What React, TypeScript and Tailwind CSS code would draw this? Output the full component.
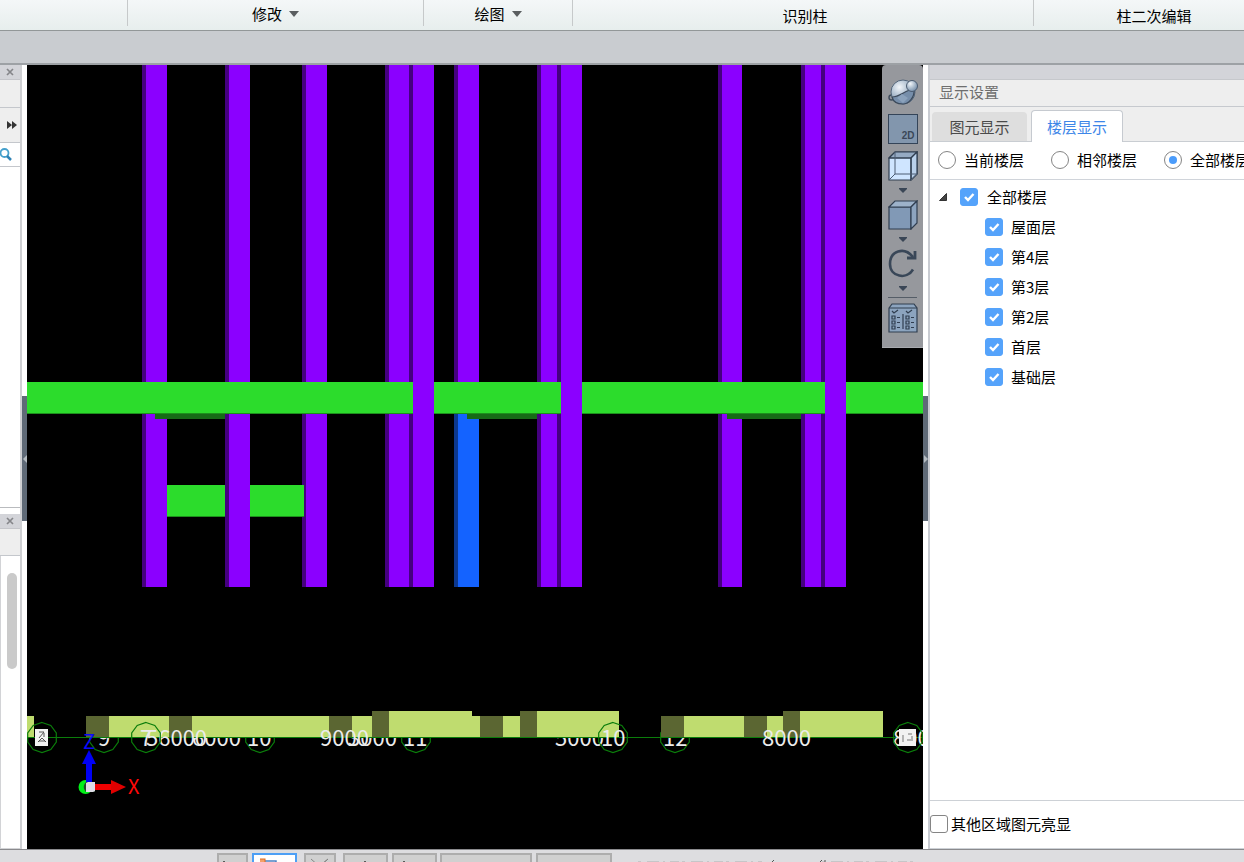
import { useState } from "react";
import type { ReactNode } from "react";

const PURPLE = "#8b00ff";
const PURPLE_SIDE = "#45007f";
const GREEN = "#2cdc2c";
const LIME = "#bfdc6f";
const OLIVE = "#5b6632";

const floors = ["屋面层", "第4层", "第3层", "第2层", "首层", "基础层"];
const scopes = ["当前楼层", "相邻楼层", "全部楼层"];

/* [left edge of side face, left edge of front face, right edge] */
const backColumns = [
  [142, 146, 167],
  [225, 229, 250],
  [302, 306, 327],
  [385, 389, 410],
  [454, 458, 479],
  [537, 541, 558],
  [718, 722, 742],
  [801, 805, 821],
];
const frontColumns = [
  [409, 413, 434],
  [557, 561, 582],
  [821, 825, 846],
];

/* [x, right, top, colour] */
const footings: [number, number, number, string][] = [
  [27, 34, 716, LIME],
  [86, 109, 716, OLIVE],
  [109, 169, 716, LIME],
  [169, 192, 716, OLIVE],
  [192, 329, 716, LIME],
  [329, 352, 716, OLIVE],
  [352, 372, 716, LIME],
  [372, 389, 711, OLIVE],
  [389, 472, 711, LIME],
  [472, 480, 716, LIME],
  [480, 503, 716, OLIVE],
  [503, 520, 716, LIME],
  [520, 537, 711, OLIVE],
  [537, 619, 711, LIME],
  [661, 684, 716, OLIVE],
  [684, 744, 716, LIME],
  [744, 767, 716, OLIVE],
  [767, 783, 716, LIME],
  [783, 800, 711, OLIVE],
  [800, 883, 711, LIME],
];

function AxisBubble({ x }: { x: number }) {
  const points = Array.from({ length: 10 }, (_, i) => {
    const a = (i * Math.PI) / 5;
    return `${(x + 15 * Math.sin(a)).toFixed(1)},${(737.5 - 15 * Math.cos(a)).toFixed(1)}`;
  }).join(" ");
  return <polygon points={points} fill="none" stroke="#0b7d0b" strokeWidth="1.2" />;
}

function GridLabel({ x, children }: { x: number; children: string }) {
  return (
    <text x={x} y="746" fill="#ececec" className="font-['Noto_Sans_CJK_SC','Noto_Sans',sans-serif] text-[22px]">
      {children}
    </text>
  );
}

function ModelView() {
  return (
    <svg viewBox="27 65 896 784" preserveAspectRatio="xMidYMid slice" className="block h-full w-full bg-black">
      {backColumns.map(([a, b, c]) => (
        <g key={a}>
          <rect x={a} y="65" width={b - a} height="522" fill={PURPLE_SIDE} />
          <rect x={b} y="65" width={c - b} height="522" fill={PURPLE} />
        </g>
      ))}
      <rect x="454" y="414" width="4" height="173" fill="#0c388f" />
      <rect x="458" y="414" width="21" height="173" fill="#1463ff" />
      <g fill="#176a17">
        <rect x="155" y="414" width="70" height="5" />
        <rect x="467" y="414" width="70" height="5" />
        <rect x="727" y="414" width="74" height="5" />
      </g>
      {frontColumns.map(([a, b, c]) => (
        <g key={a}>
          <rect x={a} y="65" width={b - a} height="522" fill={PURPLE_SIDE} />
          <rect x={b} y="65" width={c - b} height="522" fill={PURPLE} />
        </g>
      ))}
      <g fill={GREEN} stroke="none">
        <rect x="27" y="382" width="386" height="32" />
        <rect x="434" y="382" width="127" height="32" />
        <rect x="582" y="382" width="243" height="32" />
        <rect x="846" y="382" width="77" height="32" />
        <rect x="167" y="485" width="58" height="32" />
        <rect x="250" y="485" width="54" height="32" />
      </g>
      <path
        d="M27 413.5H413M434 413.5H561M582 413.5H825M846 413.5H923M167 516.5H225M250 516.5H304"
        stroke="#1d8f1d"
      />

      <AxisBubble x={104} />
      <AxisBubble x={260} />
      <AxisBubble x={416} />
      <AxisBubble x={675} />
      <GridLabel x={98}>9</GridLabel>
      <GridLabel x={192}>6000</GridLabel>
      <GridLabel x={247}>10</GridLabel>
      <GridLabel x={348}>3000</GridLabel>
      <GridLabel x={403}>11</GridLabel>
      <GridLabel x={555}>5000</GridLabel>
      <GridLabel x={663}>12</GridLabel>
      {footings.map(([x, r, y, c]) => (
        <rect key={x} x={x} y={y} width={r - x} height={737 - y} fill={c} />
      ))}
      <path d="M27 737.5H923" stroke="#0b7d0b" strokeWidth="1.2" />
      <GridLabel x={140}>7</GridLabel>
      <GridLabel x={146}>56000</GridLabel>
      <GridLabel x={320}>9000</GridLabel>
      <GridLabel x={601}>10</GridLabel>
      <GridLabel x={762}>8000</GridLabel>
      <GridLabel x={893}>8000</GridLabel>
      <rect x="35" y="729" width="13" height="17" fill="#f2f2f2" />
      <path d="M39 732h5l-5 6M44 733v4M38 742l4-4 4 4M39 741h6" fill="none" stroke="#555" />
      <rect x="899" y="729" width="17" height="17" fill="#f2f2f2" />
      <path d="M903 735v7M908 734h4M907 740h4M912 736v5" fill="none" stroke="#777" />
      <AxisBubble x={42} />
      <AxisBubble x={146} />
      <AxisBubble x={613} />
      <AxisBubble x={908} />

      <circle cx="85.500" cy="787" r="7" fill="#00f018" />
      <rect x="86" y="764" width="6" height="19" fill="#0000f5" />
      <path d="M89 750L96 764H82Z" fill="#0000f5" />
      <rect x="95" y="784" width="17" height="6" fill="#f00000" />
      <path d="M111 780L126 787L111 794Z" fill="#e00000" />
      <path d="M86 782h9v10h-9c-3-3-3-7 0-10z" fill="#24452a" />
      <path d="M86 783l2-1h7v9l-2 1h-7z" fill="#dedde6" />
      <text x="83" y="749" fill="#0a0aff" className="font-['Noto_Sans_CJK_SC',sans-serif] text-[20px]">Z</text>
      <text x="128" y="794" fill="#ff0808" className="font-['Noto_Sans_CJK_SC',sans-serif] text-[20px]">X</text>
    </svg>
  );
}

function ToolButton({ label, children }: { label: string; children: ReactNode }) {
  return (
    <button type="button" aria-label={label} className="flex h-8 w-8 items-center justify-center">
      {children}
    </button>
  );
}

function ToolCaret({ label }: { label: string }) {
  return (
    <button type="button" aria-label={label} className="flex h-[17px] w-8 items-center justify-center">
      <svg width="8" height="5" viewBox="0 0 8 5">
        <path d="M0 0H8V1L4 5L0 1Z" fill="#3a4656" />
      </svg>
    </button>
  );
}

function ViewToolbar() {
  return (
    <div className="absolute top-0 right-0 flex w-[41px] flex-col items-center rounded-t-sm border-b border-[#a9abb0] bg-[#96989d] pt-[11px] pb-[13px]">
      <ToolButton label="动态观察">
        <svg width="30" height="30" viewBox="0 0 30 30" className="shrink-0">
          <defs>
            <radialGradient id="globe" cx="35%" cy="30%" r="75%">
              <stop offset="0" stopColor="#f2f6fa" />
              <stop offset=".4" stopColor="#bccad8" />
              <stop offset="1" stopColor="#728ba7" />
            </radialGradient>
          </defs>
          <circle cx="3.500" cy="20.500" r="2.500" fill="none" stroke="#414e5e" strokeWidth="1.500" />
          <circle cx="15" cy="15" r="12" fill="url(#globe)" stroke="#53657a" />
          <path d="M4 20C12 20 17 13 26 12C27 21 20 27 15 27C9 27 5 24 4 20Z" fill="#768eaa" stroke="#3c4a5b" strokeWidth="1.200" />
          <path d="M9 21L14 17L20 21L15 26Z" fill="#8ba2bc" />
          <circle cx="24" cy="9" r="5.500" fill="url(#globe)" stroke="#4a5b70" />
        </svg>
      </ToolButton>
      <div className="h-[6px]" />
      <button type="button" className="flex h-[30px] w-[30px] items-end justify-end border border-[#344458] bg-[#8296ad] pr-0.5 pb-0.5 font-['Liberation_Sans',sans-serif] text-[10px] leading-[11px] font-bold text-[#3b4858]">
        2D
      </button>
      <div className="h-[6px]" />
      <ToolButton label="线框">
        <svg width="30" height="30" viewBox="0 0 30 30" fill="none" stroke="#303e50" strokeWidth="1.200">
          <path d="M1 7L7 1H29V23L23 29H1Z" fill="#cfe5ff" />
          <path d="M1 7L7 1H29L23 7Z" fill="#95aac3" />
          <path d="M23 7L29 1V23L23 29Z" fill="#b9d0ea" />
          <path d="M1 7H23V29" />
          <path d="M7 1V23H29M1 29L7 23M23 29L29 23" strokeWidth="1" stroke="#4c5d72" />
        </svg>
      </ToolButton>
      <ToolCaret label="线框选项" />
      <ToolButton label="视图方向">
        <svg width="30" height="30" viewBox="0 0 30 30" stroke="#303e50" strokeWidth="1.200">
          <path d="M1 7H23V29H1Z" fill="#8199b6" />
          <path d="M1 7L7 1H29L23 7Z" fill="#9db2ca" />
          <path d="M23 7L29 1V23L23 29Z" fill="#8da4bf" />
        </svg>
      </ToolButton>
      <ToolCaret label="视图方向选项" />
      <ToolButton label="旋转">
        <svg width="30" height="30" viewBox="0 0 30 30" fill="none" stroke="#394758" strokeWidth="2.600">
          <path d="M25 8C16-3 2 2 2 15C2 28 19 31 25 20.500" />
          <path d="M19 9H27V2" strokeWidth="2.800" />
        </svg>
      </ToolButton>
      <ToolCaret label="旋转选项" />
      <div className="mb-1 h-px w-[29px] bg-[#555d67]" />
      <ToolButton label="显示设置">
        <svg width="30" height="30" viewBox="0 0 30 30" fill="none" stroke="#303e50" strokeWidth="1.200">
          <path d="M1 5L4 1H26L29 5V29H1Z" fill="#8ca4bf" />
          <path d="M1 5H29M4 8l2 2 4-3M18 8l2 2 4-3M15 11V26" />
          <path d="M4 13h3v3H4zM4 18h3v3H4zM4 23h3v3H4zM18 13h3v3h-3zM18 18h3v3h-3zM18 23h3v3h-3zM9 14.500h3M9 19.500h3M9 24.500h3M23 14.500h3M23 19.500h3M23 24.500h3" />
        </svg>
      </ToolButton>
    </div>
  );
}

function CloseIcon() {
  return (
    <svg width="8" height="8" viewBox="0 0 8 8">
      <path d="M1 1L7 7M7 1L1 7" stroke="#85868a" strokeWidth="1.700" />
    </svg>
  );
}

function CheckField({ label, checked, gap }: { label: string; checked: boolean; gap: string }) {
  return (
    <label className={`flex items-center ${gap}`}>
      <span className="grid h-[18px] w-[18px] shrink-0">
        <input
          type="checkbox"
          defaultChecked={checked}
          className="peer col-start-1 row-start-1 h-[18px] w-[18px] appearance-none rounded-[3px] border border-[#858585] bg-white checked:border-[#55a3fb] checked:bg-[#55a3fb]"
        />
        <svg viewBox="0 0 18 18" className="pointer-events-none invisible col-start-1 row-start-1 peer-checked:visible">
          <path d="M5 9L8 12L13.500 6" fill="none" stroke="#fff" strokeWidth="2.400" />
        </svg>
      </span>
      <span>{label}</span>
    </label>
  );
}

function RibbonMenu({ children }: { children: string }) {
  return (
    <button type="button" className="flex h-7 items-center gap-[7px]">
      {children}
      <svg width="10" height="6" viewBox="0 0 10 6">
        <path d="M0 0H10L5 6Z" fill="#5a5e60" />
      </svg>
    </button>
  );
}

function Ribbon() {
  return (
    <header className="flex h-[31px] shrink-0 overflow-hidden border-b border-[#929798] bg-linear-to-b from-[#f4f7f8] to-[#e7eeed] text-black">
      <div className="h-[26px] w-32 shrink-0 border-r border-[#c6c9ca]" />
      <div className="flex h-[26px] w-[296px] shrink-0 justify-center border-r border-[#c6c9ca]">
        <RibbonMenu>修改</RibbonMenu>
      </div>
      <div className="flex h-[26px] w-[149px] shrink-0 justify-center border-r border-[#c6c9ca]">
        <RibbonMenu>绘图</RibbonMenu>
      </div>
      <div className="flex h-[26px] w-[461px] shrink-0 justify-center border-r border-[#c6c9ca] pl-1">
        <button type="button" className="h-8">识别柱</button>
      </div>
      <div className="flex h-[26px] min-w-[240px] flex-1 justify-center">
        <button type="button" className="h-8">柱二次编辑</button>
      </div>
    </header>
  );
}

function LeftDock() {
  return (
    <aside className="flex w-[22px] shrink-0 flex-col border-r-2 border-[#cfd0d3] bg-white">
      <button type="button" aria-label="关闭" className="flex h-[15px] shrink-0 items-center justify-center border-b border-[#c4c5ca] bg-[#d3d4d9]">
        <CloseIcon />
      </button>
      <div className="h-7 shrink-0 border-b border-[#c4c7cc] bg-[#eeeeee]" />
      <button type="button" aria-label="展开" className="flex h-[35px] shrink-0 items-center justify-end border-b border-[#c4c7cc] bg-[#eeeeee] pr-[3px]">
        <svg width="10" height="8" viewBox="0 0 10 8">
          <path d="M0 0L5 4L0 8ZM5 0L10 4L5 8Z" fill="#333" />
        </svg>
      </button>
      <button type="button" aria-label="搜索" className="flex h-6 shrink-0 items-center border-b border-[#c4c7cc]">
        <svg width="12" height="13" viewBox="0 0 12 13" fill="none">
          <circle cx="4.500" cy="5" r="4" stroke="#45a0cc" strokeWidth="1.800" />
          <path d="M7 8L11 12" stroke="#2f83b5" strokeWidth="2.500" />
        </svg>
      </button>
      <div className="min-h-0 flex-1 border-b border-[#b9bbbe]" />
      <div className="h-[6px] shrink-0" />
      <button type="button" aria-label="关闭" className="flex h-[15px] shrink-0 items-center justify-center border-b border-[#c4c5ca] bg-[#d3d4d9]">
        <CloseIcon />
      </button>
      <div className="h-[27px] shrink-0 border-b border-[#c4c7cc] bg-[#eeeeee]" />
      <div className="flex h-[293px] shrink-0 justify-end border-b border-l border-[#d2d3d6] pt-[17px] pr-[3px]">
        <div className="h-[96px] w-[10px] rounded-full bg-[#cacaca]" />
      </div>
    </aside>
  );
}

function Splitter({ path }: { path: string }) {
  return (
    <div className="flex w-[5px] shrink-0 flex-col bg-white pt-[331px]">
      <button type="button" aria-label="折叠" className="flex h-[125px] items-center justify-center bg-[#5f6a77]">
        <svg width="4" height="8" viewBox="0 0 4 8">
          <path d={path} fill="#b3bac0" />
        </svg>
      </button>
    </div>
  );
}

function DisplayPanel() {
  const [scope, setScope] = useState(2);
  return (
    <aside className="flex w-[316px] shrink-0 flex-col overflow-hidden border-l-2 border-[#c9ccd2] bg-white text-black">
      <div className="h-[15px] shrink-0 border-b border-[#c6c8cc] bg-[#d3d4d9]" />
      <h2 className="h-[27px] shrink-0 border-b border-[#c6c9ce] bg-[#eeeeee] pl-[9px] leading-6 text-[#6e6e6e]">
        显示设置
      </h2>
      <div role="tablist" className="flex h-[35px] shrink-0 items-end gap-1 border-b border-[#c9cdd2] bg-[#eeeeee] pl-0.5">
        <button type="button" role="tab" aria-selected="false" className="h-[29px] w-[95px] rounded-t bg-[#dedede] text-[#4a4a4a]">
          图元显示
        </button>
        <button type="button" role="tab" aria-selected="true" className="-mb-px h-8 w-[92px] rounded-t border border-b-0 border-[#c6cad0] bg-white text-[#3d86e8]">
          楼层显示
        </button>
      </div>
      <div className="flex h-[38px] shrink-0 items-center gap-[27px] border-b border-[#d0d4da] pb-0.5 pl-2 whitespace-nowrap">
        {scopes.map((name, i) => (
          <label key={name} className="flex shrink-0 items-center gap-2">
            <span className="grid place-items-center">
              <input
                type="radio"
                name="scope"
                checked={scope === i}
                onChange={() => setScope(i)}
                className="peer col-start-1 row-start-1 h-[18px] w-[18px] appearance-none rounded-full border border-[#858585] bg-white"
              />
              <span className="pointer-events-none invisible col-start-1 row-start-1 h-2 w-2 rounded-full bg-[#4b9cfb] peer-checked:visible" />
            </span>
            <span>{name}</span>
          </label>
        ))}
      </div>
      <ul className="min-h-0 flex-1 overflow-hidden pt-[2px]">
        <li>
          <div className="flex h-[30px] items-center gap-[13px] pl-[9px]">
            <svg width="8" height="8" viewBox="0 0 8 8">
              <path d="M7.500 .5V7.500H.5Z" fill="#444" stroke="#333" />
            </svg>
            <CheckField label="全部楼层" checked gap="gap-[9px]" />
          </div>
          <ul className="pl-[55px]">
            {floors.map((f) => (
              <li key={f} className="flex h-[30px] items-center">
                <CheckField label={f} checked gap="gap-2" />
              </li>
            ))}
          </ul>
        </li>
      </ul>
      <div className="flex h-[49px] shrink-0 items-center border-y border-[#cdd1d6] pb-0.5">
        <CheckField label="其他区域图元亮显" checked={false} gap="gap-[3px]" />
      </div>
    </aside>
  );
}

function StatusButton({ width, label, active, mark }: { width: string; label: string; active?: boolean; mark: ReactNode }) {
  return (
    <button
      type="button"
      aria-label={label}
      className={`flex h-6 shrink-0 justify-center overflow-hidden border-2 ${width} ${
        active ? "border-[#4d9ff5] bg-white" : "border-[#adadad] bg-[#d0d0d0]"
      }`}
    >
      <svg width="30" height="20" viewBox="0 0 30 20" fill="none" className="shrink-0">
        {mark}
      </svg>
    </button>
  );
}

function StatusBar() {
  return (
    <footer className="flex h-[13px] shrink-0 items-start overflow-hidden border-t border-[#8a8a8d] bg-[#dddde0] pt-[3px] pl-[217px]">
      <div className="flex shrink-0 items-start">
        <StatusButton width="w-[31px] mr-1" label="正交" mark={<path d="M6 6V16H22" stroke="#333" strokeWidth="1.500" />} />
        <StatusButton
          width="w-[45px] mr-[7px]"
          label="对象捕捉"
          active
          mark={
            <>
              <path d="M3 6H16V18" stroke="#4c82c4" strokeWidth="1.500" />
              <rect x="-1" y="4" width="6" height="6" fill="#f4a068" stroke="#dc6c20" />
            </>
          }
        />
        <StatusButton width="w-8 mr-[7px]" label="交点" mark={<path d="M6 4L14 11M23 4L15 11M6 18L23 4" stroke="#858585" />} />
        <StatusButton width="w-[45px] mr-1" label="垂点" mark={<path d="M14 6V18H4" stroke="#333" strokeWidth="1.500" />} />
        <StatusButton width="w-[45px] mr-[3px]" label="中点" mark={<path d="M4 6V18H20" stroke="#333" strokeWidth="1.500" />} />
        <StatusButton width="w-[92px] mr-1" label="坐标" mark={<path d="M-10 8H40" stroke="#b4b4b4" strokeDasharray="7 3 11 4" />} />
        <StatusButton width="w-[76px]" label="偏移" mark={<path d="M-10 8H40" stroke="#b4b4b4" strokeDasharray="2 3 11 4" />} />
        <svg width="310" height="9" viewBox="0 0 310 9" fill="none">
          <path d="M26 8.500H150M210 8.500H306" stroke="#c6c6c8" strokeDasharray="3 6 12 4 2 5 9 3" />
          <path d="M162 7l-2 2M210 7l-2 2M213 7v2" stroke="#555" />
        </svg>
      </div>
    </footer>
  );
}

export default function App() {
  return (
    <div className="flex h-screen flex-col overflow-hidden bg-white font-['Noto_Sans_CJK_SC','Noto_Sans',sans-serif] text-[15px] leading-5">
      <Ribbon />
      <div className="h-[34px] shrink-0 border-b-2 border-[#9da1a5] bg-[#c9ccd0]" />
      <div className="flex min-h-0 flex-1">
        <LeftDock />
        <Splitter path="M4 0V8L0 4Z" />
        <main className="relative min-w-0 flex-1 overflow-hidden bg-black">
          <ModelView />
          <ViewToolbar />
        </main>
        <Splitter path="M0 0V8L4 4Z" />
        <DisplayPanel />
      </div>
      <StatusBar />
    </div>
  );
}
